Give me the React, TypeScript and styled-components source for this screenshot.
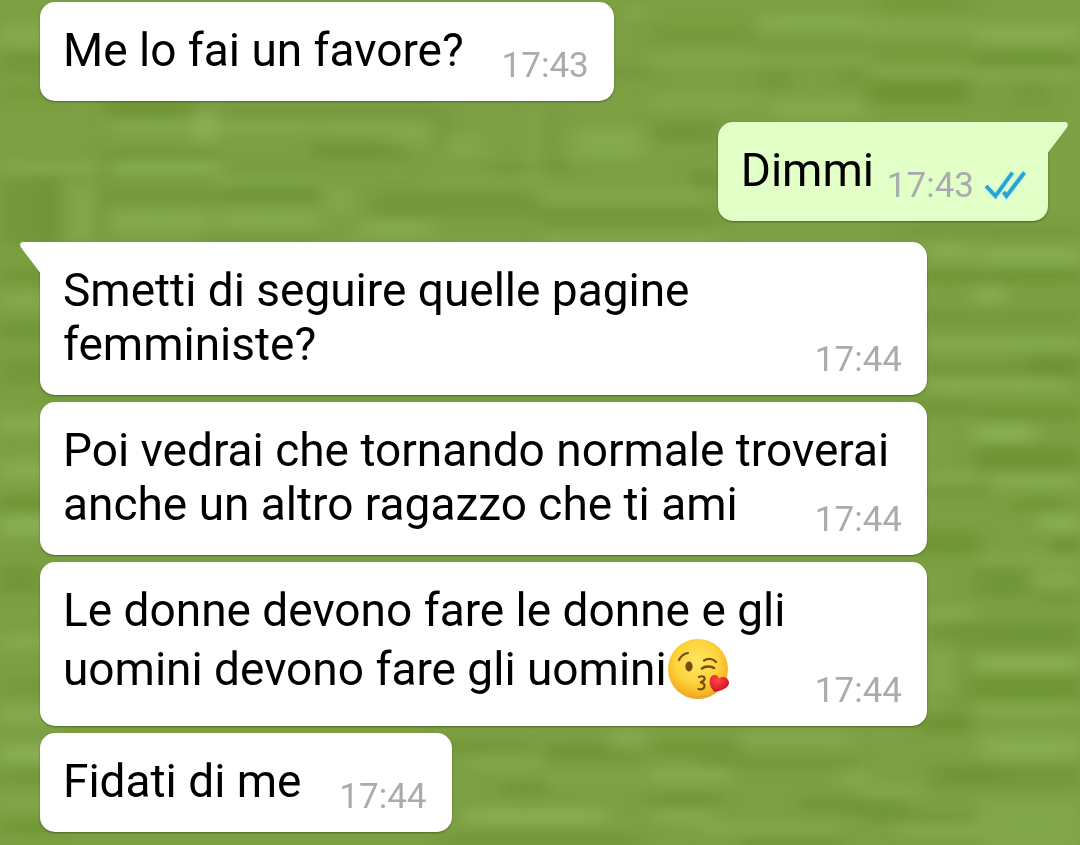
import React from 'react';
import styled, { createGlobalStyle, css } from 'styled-components';

type Side = 'in' | 'out';

interface ChatMessage {
  id: number;
  side: Side;
  text: string;
  time: string;
  tail?: boolean;
  kiss?: boolean;
}

const messages: ChatMessage[] = [
  { id: 1, side: 'in', text: 'Me lo fai un favore?', time: '17:43' },
  { id: 2, side: 'out', text: 'Dimmi', time: '17:43', tail: true },
  { id: 3, side: 'in', text: 'Smetti di seguire quelle pagine femministe?', time: '17:44', tail: true },
  { id: 4, side: 'in', text: 'Poi vedrai che tornando normale troverai anche un altro ragazzo che ti ami', time: '17:44' },
  { id: 5, side: 'in', text: 'Le donne devono fare le donne e gli uomini devono fare gli uomini', time: '17:44', kiss: true },
  { id: 6, side: 'in', text: 'Fidati di me', time: '17:44' },
];

const bubbleColor = { in: '#ffffff', out: '#e1ffc7' };

const GlobalStyle = createGlobalStyle`
  *, *::before, *::after { box-sizing: border-box; }
  body {
    margin: 0;
    background: #7ca043;
    font-family: Roboto, "Liberation Sans", sans-serif;
  }
`;

const Chat = styled.main`
  position: relative;
  isolation: isolate;
  min-height: 100vh;
  padding: 2px 32px 13px 40px;
  overflow: hidden;
`;

const Wallpaper = styled.svg`
  position: absolute;
  inset: 0;
  z-index: -1;
  width: 100%;
  height: 100%;
`;

const MessageList = styled.ol`
  display: flex;
  flex-direction: column;
  gap: 7px;
  margin: 0;
  padding: 0;
  list-style: none;
`;

/* A bubble with a tail opens a new group, set further from the one above. */
const Bubble = styled.li<{ $side: Side; $tail?: boolean }>`
  position: relative;
  align-self: ${({ $side }) => ($side === 'in' ? 'flex-start' : 'flex-end')};
  max-width: 88%;
  margin-top: ${({ $tail }) => ($tail ? 14 : 0)}px;
  padding: 21px 25px 24px 23px;
  border-radius: 15px;
  background: ${({ $side }) => bubbleColor[$side]};
  box-shadow: 0 1px 2px rgba(40, 60, 15, 0.55);

  ${({ $tail, $side }) =>
    $tail &&
    ($side === 'in'
      ? css`border-top-left-radius: 0;`
      : css`border-top-right-radius: 0;`)}
`;

const Tail = styled.svg<{ $side: Side }>`
  position: absolute;
  top: 0;
  width: 21px;
  height: 32px;
  fill: ${({ $side }) => bubbleColor[$side]};
  ${({ $side }) =>
    $side === 'in' ? css`left: -20px;` : css`right: -20px; transform: scaleX(-1);`}
`;

const Text = styled.p`
  margin: 0;
  color: #000;
  font-size: 46px;
  line-height: 54px;
`;

/* Keeps room for the time stamp at the end of the last line. */
const StampSpace = styled.span<{ $side: Side }>`
  display: inline-block;
  width: ${({ $side }) => ($side === 'in' ? 125 : 149)}px;
`;

const Stamp = styled.div<{ $side: Side }>`
  position: absolute;
  right: ${({ $side }) => ($side === 'in' ? 25 : 22)}px;
  bottom: 14px;
  display: flex;
  align-items: center;
  gap: 10px;
  color: #a9abad;
  font-size: 35px;
  line-height: 42px;
`;

const Ticks = styled.svg`
  width: 42px;
  height: 30px;
`;

const Emoji = styled.svg`
  width: 63px;
  height: 65px;
  vertical-align: -17px;
`;

type Patch = [x: number, y: number, w: number, h: number, o: number];

const darkPatches: Patch[] = [
  [0, 50, 60, 24, 0.5], [0, 86, 60, 14, 0.4], [0, 176, 60, 70, 0.5], [38, 178, 22, 70, 0.5], [96, 184, 12, 60, 0.5],
  [106, 100, 90, 18, 0.7], [100, 150, 115, 30, 0.6], [230, 166, 90, 32, 0.4], [216, 106, 220, 12, 0.5], [310, 142, 100, 18, 0.6],
  [108, 190, 212, 12, 0.6], [200, 234, 120, 8, 0.6], [370, 192, 170, 26, 0.5],
  [434, 110, 14, 40, 0.5], [490, 164, 80, 8, 0.8], [540, 110, 14, 60, 0.5], [650, 122, 68, 20, 0.6], [540, 208, 180, 20, 0.5],
  [610, 68, 40, 10, 0.6], [650, 24, 105, 22, 0.4], [755, 42, 110, 14, 0.4], [760, 68, 30, 22, 0.5], [838, 66, 24, 20, 0.5],
  [868, 80, 102, 24, 0.8], [880, 2, 90, 9, 0.7], [870, 44, 100, 16, 0.4], [974, 54, 106, 12, 0.8], [1010, 80, 40, 28, 0.4],
  [690, 170, 34, 20, 0.6],
  [900, 227, 180, 10, 0.5], [920, 271, 160, 12, 0.8], [920, 307, 160, 22, 0.4], [920, 361, 160, 15, 0.5], [1030, 354, 50, 24, 0.6],
  [920, 400, 50, 15, 0.6], [974, 405, 106, 15, 0.7], [974, 446, 106, 24, 0.8], [920, 485, 70, 12, 0.6], [1010, 499, 60, 12, 0.7],
  [920, 531, 60, 24, 0.7], [1050, 538, 30, 17, 0.8], [974, 567, 60, 30, 0.6], [1040, 587, 40, 17, 0.5], [974, 621, 106, 27, 0.6],
  [926, 623, 46, 17, 0.5], [958, 618, 12, 109, 0.5], [974, 674, 106, 29, 0.7], [920, 716, 50, 16, 0.9], [930, 764, 150, 24, 0.5],
  [440, 740, 90, 14, 0.5], [545, 742, 95, 20, 0.6], [650, 742, 90, 12, 0.7], [700, 758, 160, 10, 0.6], [500, 782, 50, 14, 0.6],
  [645, 795, 80, 10, 0.7], [800, 797, 110, 16, 0.6], [860, 813, 110, 8, 0.6], [440, 834, 200, 12, 0.6], [740, 838, 100, 10, 0.8],
  [945, 766, 50, 18, 0.5], [0, 270, 60, 12, 0.7], [0, 321, 60, 19, 0.6], [0, 360, 60, 25, 0.5], [0, 497, 60, 12, 0.9],
  [0, 564, 40, 30, 0.6], [0, 678, 60, 19, 0.4], [0, 770, 60, 14, 0.5], [0, 821, 60, 12, 0.7], [40, 394, 886, 8, 0.4],
];

const lightPatches: Patch[] = [
  [0, 24, 60, 24, 0.6], [0, 162, 100, 10, 0.6], [196, 112, 20, 30, 1], [110, 120, 100, 12, 0.6], [112, 162, 104, 12, 1],
  [216, 120, 100, 12, 0.5], [320, 122, 112, 10, 0.6], [390, 132, 42, 16, 0.4], [70, 186, 24, 54, 0.5], [110, 212, 100, 20, 0.6],
  [216, 176, 104, 8, 0.6], [220, 212, 100, 18, 0.6], [328, 186, 22, 28, 0.5], [360, 220, 72, 18, 0.6], [530, 110, 10, 70, 0.6],
  [445, 134, 40, 24, 0.4], [574, 128, 70, 30, 0.6], [430, 178, 110, 6, 0.4], [540, 190, 170, 10, 0.6], [540, 234, 180, 8, 0.6],
  [624, 6, 24, 12, 0.5], [758, 14, 110, 18, 0.6], [650, 54, 220, 10, 0.5], [870, 68, 100, 8, 0.5], [974, 24, 106, 18, 0.7],
  [870, 18, 100, 18, 0.4], [650, 96, 105, 12, 0.5], [974, 70, 106, 10, 0.5], [770, 100, 95, 18, 0.6],
  [926, 242, 46, 17, 0.7], [980, 247, 100, 17, 0.8], [974, 285, 30, 20, 0.7], [926, 339, 154, 10, 0.8], [926, 380, 140, 10, 0.9],
  [974, 424, 60, 18, 0.9], [926, 473, 50, 12, 0.6], [990, 475, 90, 12, 0.8], [1040, 514, 40, 17, 0.9], [980, 555, 100, 10, 0.5],
  [1030, 572, 50, 17, 0.6], [926, 609, 46, 10, 0.8], [974, 655, 106, 17, 0.8], [926, 652, 30, 40, 0.5], [974, 703, 106, 10, 0.8],
  [980, 735, 100, 24, 0.7],
  [470, 758, 70, 10, 0.6], [610, 728, 34, 22, 0.6], [740, 732, 110, 12, 0.6], [650, 770, 80, 10, 1], [840, 770, 30, 14, 0.6],
  [465, 810, 140, 12, 1], [545, 774, 95, 8, 0.4], [654, 812, 60, 10, 0.7], [700, 824, 140, 10, 0.6], [900, 826, 80, 8, 0.8],
  [860, 786, 60, 12, 0.6], [980, 800, 100, 50, 0.4],
  [0, 293, 60, 16, 0.6], [0, 416, 60, 16, 0.7], [0, 460, 60, 20, 0.7], [0, 516, 60, 20, 0.9], [0, 634, 60, 16, 0.6],
  [0, 705, 60, 20, 0.6], [0, 745, 60, 18, 0.9], [0, 796, 60, 12, 0.5],
];

const drawPatches = (patches: Patch[], fill: string) =>
  patches.map(([x, y, width, height, opacity], i) => (
    <rect key={i} x={x} y={y} width={width} height={height} fill={fill} opacity={opacity} />
  ));

/* Mottled grass: soft darker and lighter strokes over a flat green. */
function Grass() {
  return (
    <Wallpaper viewBox="0 0 1080 845" preserveAspectRatio="none" aria-hidden="true">
      <defs>
        <filter id="soft" x="-5%" y="-5%" width="110%" height="110%">
          <feGaussianBlur stdDeviation="9 6" />
        </filter>
      </defs>
      <g filter="url(#soft)">
        {drawPatches(darkPatches, '#6b9031')}
        {drawPatches(lightPatches, '#8bb054')}
      </g>
    </Wallpaper>
  );
}

function KissEmoji() {
  return (
    <Emoji viewBox="2 0 63 65" role="img" aria-label="faccina che manda un bacio">
      <defs>
        <radialGradient id="face" cx="0.48" cy="0.38" r="0.64">
          <stop offset="0" stopColor="#ffe765" />
          <stop offset="0.55" stopColor="#fdd43c" />
          <stop offset="0.85" stopColor="#f6b425" />
          <stop offset="1" stopColor="#e79a22" />
        </radialGradient>
        <radialGradient id="heart" cx="0.4" cy="0.3" r="0.75">
          <stop offset="0" stopColor="#ff4b4b" />
          <stop offset="0.6" stopColor="#e5222e" />
          <stop offset="1" stopColor="#b9121f" />
        </radialGradient>
      </defs>
      <circle cx="33" cy="32" r="30" fill="url(#face)" />
      <g fill="none" stroke="#7b4a0a" strokeLinecap="round">
        <path d="M14 23C16 19 19 16.500 23 16" strokeWidth="2.200" />
        <path d="M39 23.500C43 21 48 21.500 51 25" strokeWidth="2.200" />
        <path d="M37 31.500C40 29 46 29 49 31" strokeWidth="2.600" />
        <path d="M34 40C37 38.500 40 39.500 39.500 42C39 44 37 45 35 45.500C38 45.500 40 47 39.500 49.500C39 52 36 53 33.500 52" strokeWidth="2.200" />
      </g>
      <ellipse cx="24" cy="29.500" rx="3.600" ry="5" fill="#7b4a0a" />
      <path d="M49.500 55C45.500 50.500 44 47 45 42C46.500 37 52 36.500 54 41.500C58 38.500 63 40.500 64 45C64.500 50 58.500 53.500 49.500 55Z" fill="url(#heart)" />
    </Emoji>
  );
}

function ReadTicks() {
  return (
    <Ticks viewBox="0 0 42 30" role="img" aria-label="Letto">
      <g fill="none">
        <g stroke="#a8f0f5" strokeWidth="6" opacity="0.6">
          <path d="M2 15L11.500 25L28.500 1.500" />
          <path d="M19.500 21L22.500 25L40.500 1.500" />
        </g>
        <g stroke="#29a3d2" strokeWidth="3.800">
          <path d="M2 15L11.500 25L28.500 1.500" />
          <path d="M19.500 21L22.500 25L40.500 1.500" />
        </g>
      </g>
    </Ticks>
  );
}

function Message({ message }: { message: ChatMessage }) {
  const { side, text, time, tail, kiss } = message;
  return (
    <Bubble $side={side} $tail={tail}>
      {tail && (
        <Tail $side={side} viewBox="0 0 21 32" aria-hidden="true">
          <path d="M3 0H21V32L20 30.500L1 5.500C-0.800 2.500 0.500 0 3 0Z" />
        </Tail>
      )}
      <Text>
        {text}
        {kiss && <KissEmoji />}
        <StampSpace $side={side} />
      </Text>
      <Stamp $side={side}>
        <time>{time}</time>
        {side === 'out' && <ReadTicks />}
      </Stamp>
    </Bubble>
  );
}

export default function App() {
  return (
    <>
      <GlobalStyle />
      <Chat>
        <Grass />
        <MessageList>
          {messages.map((message) => (
            <Message key={message.id} message={message} />
          ))}
        </MessageList>
      </Chat>
    </>
  );
}
